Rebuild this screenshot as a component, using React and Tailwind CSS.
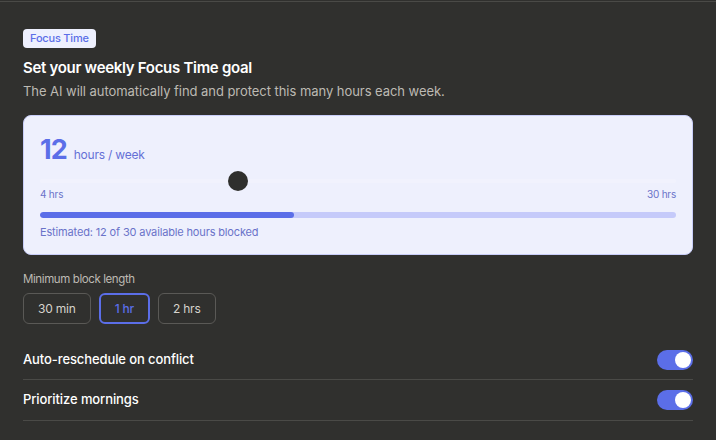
export default function App() {
  return (
    <div
      className="w-[716px] h-[440px] bg-[#30302e] overflow-hidden"
      style={{ fontFamily: "Inter, 'Noto Sans', sans-serif" }}
    >
      <div className="h-px mt-px bg-[#4a4a47]" />
      <div className="px-[23px] w-[716px]">
        <div className="w-[670px]">
          <div className="pt-[27px] flex">
            <span className="flex items-center h-[19px] px-[7px] rounded-[4px] bg-[#eef0fe] text-[#5b6ee8] text-[11px] font-medium tracking-[-0.2px]">
              Focus Time
            </span>
          </div>
          <h1 className="mt-[10px] text-[15px] leading-[20px] font-semibold text-white tracking-[-0.3px]">
            Set your weekly Focus Time goal
          </h1>
          <p className="mt-[5px] text-[13px] leading-[16px] text-[#bdbab3] tracking-[-0.05px]">
            The AI will automatically find and protect this many hours each week.
          </p>

          <div className="mt-[16px] h-[140px] rounded-[8px] border border-[#c8cdf8] bg-[#eef0fd] px-[16px] pt-[18px]">
            <div className="flex items-baseline gap-[7px] h-[32px]">
              <span className="text-[27px] leading-[32px] font-bold text-[#5b6ee8] tracking-[-1px]">12</span>
              <span className="text-[12px] text-[#6570d6] tracking-[-0.2px]">hours / week</span>
            </div>
            <div className="relative mt-[10px] h-[10px] flex items-center">
              <div className="w-full h-[4px] rounded-full bg-[#f1f2fd]" />
              <div className="absolute top-[-5px] left-[188px] w-[20px] h-[20px] rounded-full bg-[#2f2f2d]" />
            </div>
            <div className="mt-[1px] flex justify-between text-[10px] leading-[14px] text-[#6a73c9] tracking-[-0.2px]">
              <span>4 hrs</span>
              <span>30 hrs</span>
            </div>
            <div className="mt-[11px] h-[6px] rounded-full bg-[#c5cafa] overflow-hidden">
              <div className="h-full w-[40%] rounded-full bg-[#5b6ee8]" />
            </div>
            <div className="mt-[7px] text-[11px] leading-[14px] text-[#6a73c9] tracking-[-0.15px]">
              Estimated: 12 of 30 available hours blocked
            </div>
          </div>

          <div className="mt-[16px] text-[11.5px] leading-[16px] text-[#bdbab3] tracking-[-0.4px]">
            Minimum block length
          </div>
          <div className="mt-[6px] flex gap-[8px]">
            <button className="h-[31px] px-[14px] rounded-[6px] border border-[#5a5956] text-[12px] text-[#d6d3cc] tracking-[-0.2px]">
              30 min
            </button>
            <button className="h-[31px] px-[14px] rounded-[6px] border-2 border-[#5b6ee8] text-[12px] font-medium text-[#5b6ee8] tracking-[-0.2px]">
              1 hr
            </button>
            <button className="h-[31px] px-[14px] rounded-[6px] border border-[#5a5956] text-[12px] text-[#d6d3cc] tracking-[-0.2px]">
              2 hrs
            </button>
          </div>

          <div className="mt-[17px]">
            <div className="flex items-center justify-between h-[39px] border-b border-[#4a4a47]">
              <span className="text-[13px] font-medium text-white tracking-[-0.1px]">Auto-reschedule on conflict</span>
              <div className="w-[36px] h-[20px] rounded-full bg-[#5b6ee8] flex items-center justify-end pr-[2px]">
                <div className="w-[16px] h-[16px] rounded-full bg-white" />
              </div>
            </div>
            <div className="flex items-center justify-between h-[41px] border-b border-[#4a4a47]">
              <span className="text-[13px] font-medium text-white tracking-[-0.1px]">Prioritize mornings</span>
              <div className="w-[36px] h-[20px] rounded-full bg-[#5b6ee8] flex items-center justify-end pr-[2px]">
                <div className="w-[16px] h-[16px] rounded-full bg-white" />
              </div>
            </div>
          </div>
        </div>
      </div>
    </div>
  );
}
